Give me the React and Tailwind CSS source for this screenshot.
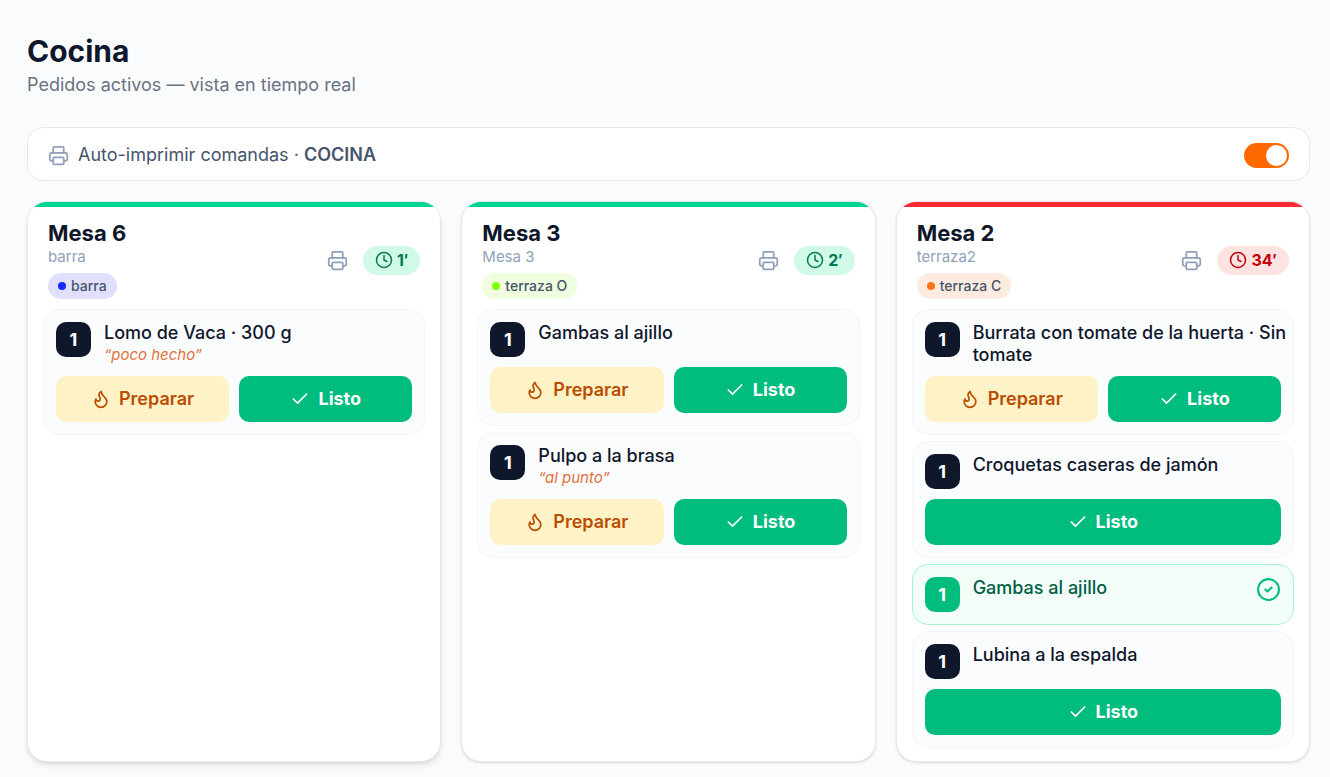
import { useState } from "react";
import { Check, CircleCheck, Clock, Flame, Printer } from "lucide-react";

const mesas = [
  {
    nombre: "Mesa 6",
    detalle: "barra",
    zona: "barra",
    minutos: 1,
    sombra: "shadow-md",
    barra: "bg-[#00d492]",
    tiempo: "bg-[#d0fae5] text-[#007a55]",
    pill: "bg-[#e0e0fe]",
    punto: "bg-[#1a2bff]",
    platos: [
      { nombre: "Lomo de Vaca · 300 g", nota: "poco hecho", estado: "pendiente" },
    ],
  },
  {
    nombre: "Mesa 3",
    detalle: "Mesa 3",
    zona: "terraza O",
    minutos: 2,
    sombra: "shadow-sm",
    barra: "bg-[#00d492]",
    tiempo: "bg-[#d0fae5] text-[#007a55]",
    pill: "bg-[#f0fee0]",
    punto: "bg-[#80ff0a]",
    platos: [
      { nombre: "Gambas al ajillo", estado: "pendiente" },
      { nombre: "Pulpo a la brasa", nota: "al punto", estado: "pendiente" },
    ],
  },
  {
    nombre: "Mesa 2",
    detalle: "terraza2",
    zona: "terraza C",
    minutos: 34,
    sombra: "shadow-sm",
    barra: "bg-[#fb2c36]",
    tiempo: "bg-[#ffe2e2] text-[#c10007]",
    pill: "bg-[#feebe0]",
    punto: "bg-[#ff7519]",
    platos: [
      { nombre: "Burrata con tomate de la huerta · Sin tomate", estado: "pendiente" },
      { nombre: "Croquetas caseras de jamón", estado: "preparando" },
      { nombre: "Gambas al ajillo", estado: "listo" },
      { nombre: "Lubina a la espalda", estado: "preparando" },
    ],
  },
];

function Plato({ plato }) {
  const listo = plato.estado === "listo";

  return (
    <li
      className={
        listo
          ? "rounded-2xl border border-[#a4f4cf] bg-[#f3fef9] p-3"
          : "rounded-2xl border border-[#f3f5f9] bg-[#fbfcfe] p-3"
      }
    >
      <div className="flex items-start gap-[13px]">
        <span
          className={
            listo
              ? "flex size-[35px] shrink-0 items-center justify-center rounded-[10px] bg-[#00bc7d] text-lg font-bold text-white"
              : "flex size-[35px] shrink-0 items-center justify-center rounded-[10px] bg-slate-900 text-lg font-bold text-white"
          }
        >
          1
        </span>
        <div className="-mr-2 min-w-0 flex-1">
          <p
            className={
              listo
                ? "text-lg leading-[22px] font-medium text-[#006045]"
                : "text-lg leading-[22px] font-medium text-slate-900"
            }
          >
            {plato.nombre}
          </p>
          {plato.nota && (
            <p className="text-[15px] leading-[22px] text-[#e0703a] italic">
              “{plato.nota}”
            </p>
          )}
        </div>
        {listo && (
          <CircleCheck className="size-[25px] shrink-0 text-[#00bc7d]" />
        )}
      </div>

      {!listo && (
        <div className="mt-[10px] flex gap-[10px]">
          {plato.estado === "pendiente" && (
            <button className="flex h-[46px] flex-1 items-center justify-center gap-2 rounded-[10px] bg-[#fef3c6] text-lg font-semibold text-[#bb4d00]">
              <Flame className="size-5" />
              Preparar
            </button>
          )}
          <button className="flex h-[46px] flex-1 items-center justify-center gap-2 rounded-[10px] bg-[#00bc7d] text-lg font-bold text-white">
            <Check className="size-5" />
            Listo
          </button>
        </div>
      )}
    </li>
  );
}

function Mesa({ mesa }) {
  return (
    <article
      className={`flex flex-col overflow-hidden rounded-[20px] border border-[#e5e9ef] bg-white ${mesa.sombra}`}
    >
      <div className={`h-[5px] ${mesa.barra}`} />
      <header className="flex items-center justify-between px-5 pt-[14px] pb-[10px]">
        <div>
          <h2 className="text-[22px] leading-[25px] font-bold text-slate-900">
            {mesa.nombre}
          </h2>
          <p className="text-[15px] leading-[22px] text-[#90a1b9]">
            {mesa.detalle}
          </p>
          <span
            className={`mt-[5px] inline-flex h-[26px] items-center gap-[5px] rounded-full px-[10px] text-sm font-medium text-slate-600 ${mesa.pill}`}
          >
            <span className={`size-2 rounded-full ${mesa.punto}`} />
            {mesa.zona}
          </span>
        </div>
        <div className="flex items-center gap-[15px]">
          <button aria-label="Imprimir comanda" className="text-[#90a1b9]">
            <Printer className="size-[21px]" />
          </button>
          <span
            className={`flex h-[29px] items-center gap-1 rounded-full px-3 text-base font-bold ${mesa.tiempo}`}
          >
            <Clock className="size-[18px]" />
            {mesa.minutos}′
          </span>
        </div>
      </header>
      <ul className="flex flex-col gap-[6px] px-[15px] pb-[13px]">
        {mesa.platos.map((plato) => (
          <Plato key={plato.nombre} plato={plato} />
        ))}
      </ul>
    </article>
  );
}

export default function App() {
  const [auto, setAuto] = useState(true);

  return (
    <main className="min-h-screen bg-[#fafbfd] pt-8 pr-5 pb-[14px] pl-[27px] font-[Inter,sans-serif]">
      <h1 className="text-[30px] leading-[38px] font-bold text-slate-900">Cocina</h1>
      <p className="text-lg leading-[30px] text-[#6a7282]">
        Pedidos activos — vista en tiempo real
      </p>

      <label className="mt-[27px] flex h-[54px] items-center justify-between rounded-2xl border border-[#e5e9ef] bg-white px-5 pt-[2px]">
        <span className="flex items-center gap-[9px] text-lg text-slate-600">
          <Printer className="size-[21px] text-[#90a1b9]" />
          <span>
            Auto-imprimir comandas · <strong className="font-semibold">COCINA</strong>
          </span>
        </span>
        <input
          type="checkbox"
          role="switch"
          checked={auto}
          onChange={(e) => setAuto(e.target.checked)}
          className="h-[25px] w-[45px] cursor-pointer appearance-none rounded-full bg-slate-300 p-[2px] before:block before:size-[21px] before:rounded-full before:bg-white checked:bg-[#ff6900] checked:before:translate-x-5"
        />
      </label>

      <section className="mt-5 grid grid-cols-3 gap-5">
        {mesas.map((mesa) => (
          <Mesa key={mesa.nombre} mesa={mesa} />
        ))}
      </section>
    </main>
  );
}
